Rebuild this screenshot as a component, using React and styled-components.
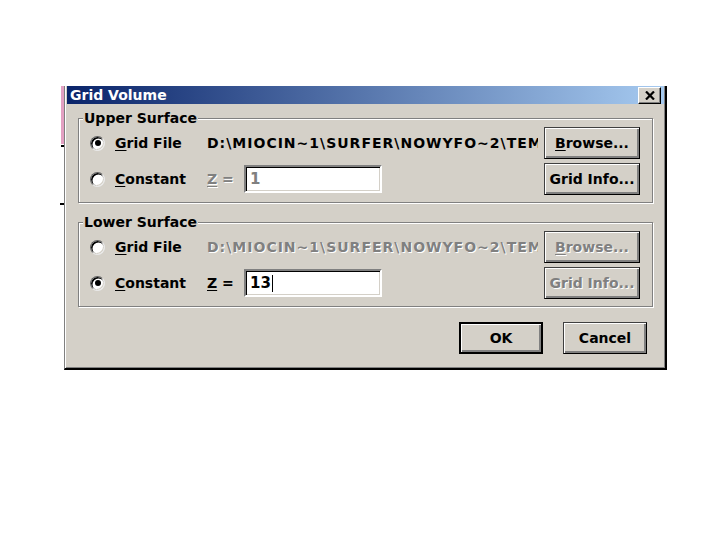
import React from "react";
import styled, { createGlobalStyle, css } from "styled-components";

const Global = createGlobalStyle`
  html, body { margin: 0; padding: 0; background: #fff; }
  body { font-family: "DejaVu Sans", "Liberation Sans", sans-serif; }
`;

const Page = styled.div`
  display: flex;
  align-items: flex-start;
  padding: 86px 0 0 58px;
`;

const Side = styled.div`
  width: 6px;
  display: flex;
  flex-direction: column;
  align-items: flex-end;
`;

const Pink = styled.div`
  width: 3px;
  height: 58px;
  background: #e3a0c2;
`;

const Tick = styled.div`
  width: ${(p) => p.$w}px;
  height: 2px;
  background: #000;
  margin-top: ${(p) => p.$top}px;
`;

const Dialog = styled.div`
  width: 597px;
  background: #d4d0c8;
  border-left: 1px solid #808080;
  border-right: 2px solid #000;
  border-bottom: 2px solid #000;
  box-shadow: inset 1px 0 #fff, inset -1px -1px #808080;
  padding: 0 1px 0 2px;
  display: flex;
  flex-direction: column;
`;

const TitleBar = styled.div`
  height: 18px;
  display: flex;
  align-items: center;
  justify-content: space-between;
  padding: 0 3px 0 3px;
  background: linear-gradient(to right, #0a246a, #a6caf0);
`;

const Title = styled.span`
  color: #fff;
  font-weight: bold;
  font-size: 14px;
  line-height: 18px;
`;

const CloseBtn = styled.div`
  width: 21px;
  height: 15px;
  background: #d4d0c8;
  border: 1px solid;
  border-color: #fff #000 #000 #fff;
  box-shadow: inset -1px -1px #808080;
  display: flex;
  align-items: center;
  justify-content: center;
`;

const Body = styled.div`
  display: flex;
  flex-direction: column;
  padding: 14px 11px 14px 11px;
`;

const Group = styled.div`
  position: relative;
  border: 1px solid #808080;
  box-shadow: inset 1px 1px #fff, 1px 1px #fff;
  padding: 8px 11px 7px 11px;
  display: grid;
  grid-template-columns: 111px 331px 96px;
  grid-template-rows: 32px 32px;
  column-gap: 6px;
  row-gap: 4px;
  margin-bottom: ${(p) => p.$mb}px;
`;

const Legend = styled.span`
  position: absolute;
  top: -10px;
  left: 4px;
  padding: 0 1px 0 1px;
  background: #d4d0c8;
  font-size: 14px;
  font-weight: bold;
  line-height: 18px;
  color: #000;
`;

const Label = styled.label`
  display: flex;
  align-items: center;
  gap: 10px;
  font-size: 14px;
  font-weight: bold;
  color: #000;
  white-space: nowrap;
`;

const Radio = styled.span`
  position: relative;
  box-sizing: border-box;
  width: 15px;
  height: 15px;
  border-radius: 50%;
  background: #fff;
  border: 1px solid;
  border-color: #606060 #e8e8e8 #e8e8e8 #606060;
  box-shadow: inset 1px 1px 0 0.5px #000, inset -1px -1px #d4d0c8;
  flex: none;
  ${(p) =>
    p.$checked &&
    css`
      &::after {
        content: "";
        position: absolute;
        left: 3.5px;
        top: 3.5px;
        width: 6px;
        height: 6px;
        border-radius: 50%;
        background: #000;
      }
    `}
`;

const disabledText = css`
  color: #808080;
  text-shadow: 1px 1px 0 #fff;
`;

const Key = styled.span`
  text-decoration: underline;
  text-underline-offset: 2px;
  text-decoration-thickness: 1px;
`;

const Path = styled.div`
  display: flex;
  align-items: center;
  overflow: hidden;
  white-space: nowrap;
  font-size: 14px;
  font-weight: bold;
  letter-spacing: 1px;
  color: #000;
  ${(p) => p.$disabled && disabledText}
`;

const ZCell = styled.div`
  display: flex;
  align-items: center;
  gap: 10px;
`;

const ZLabel = styled.span`
  font-size: 14px;
  font-weight: bold;
  color: #000;
  width: 27px;
  white-space: nowrap;
  ${(p) => p.$disabled && disabledText}
`;

const Field = styled.div`
  box-sizing: border-box;
  width: 138px;
  height: 28px;
  background: #fff;
  border: 2px solid;
  border-color: #808080 #fff #fff #808080;
  box-shadow: inset 1px 1px #000, inset -1px -1px #d4d0c8;
  display: flex;
  align-items: center;
  padding-left: 4px;
  font-size: 15px;
  font-weight: bold;
  color: ${(p) => (p.$disabled ? "#808080" : "#000")};
`;

const Caret = styled.span`
  width: 1px;
  height: 17px;
  background: #000;
  margin-left: 1px;
`;

const Button = styled.div`
  box-sizing: border-box;
  width: ${(p) => p.$w}px;
  height: 32px;
  display: flex;
  align-items: center;
  justify-content: center;
  background: #d4d0c8;
  border: 1px solid;
  border-color: #404040 #000 #000 #404040;
  box-shadow: inset 1px 1px #fff, inset -2px -2px #808080;
  font-size: 14px;
  font-weight: bold;
  color: #000;
  white-space: nowrap;
  ${(p) => p.$disabled && disabledText}
  ${(p) =>
    p.$default &&
    css`
      border: 2px solid #000;
      box-shadow: inset 1px 1px #fff, inset -2px -2px #808080;
    `}
`;

const ButtonRow = styled.div`
  display: flex;
  justify-content: flex-end;
  gap: 20px;
  padding-right: 6px;
  margin-top: 15px;
`;

const PATH = "D:\\MIOCIN~1\\SURFER\\NOWYFO~2\\TEMP.GRD";

function SurfaceGroup({ title, fileChecked, value, mb, caret }) {
  const fileOff = !fileChecked;
  return (
    <Group $mb={mb}>
      <Legend>{title}</Legend>
      <Label>
        <Radio $checked={fileChecked} />
        <span>
          <Key>G</Key>rid File
        </span>
      </Label>
      <Path $disabled={fileOff}>{PATH}</Path>
      <Button $w={96} $disabled={fileOff}>
        <span>
          <Key>B</Key>rowse...
        </span>
      </Button>
      <Label>
        <Radio $checked={!fileChecked} />
        <span>
          <Key>C</Key>onstant
        </span>
      </Label>
      <ZCell>
        <ZLabel $disabled={fileChecked}>
          <Key>Z</Key> =
        </ZLabel>
        <Field $disabled={fileChecked}>
          {value}
          {caret && <Caret />}
        </Field>
      </ZCell>
      <Button $w={96} $disabled={fileOff}>
        Grid Info...
      </Button>
    </Group>
  );
}

export default function App() {
  return (
    <>
      <Global />
      <Page>
        <Side>
          <Pink />
          <Tick $w={3} $top={1} />
          <Tick $w={4} $top={56} />
        </Side>
        <Dialog>
          <TitleBar>
            <Title>Grid Volume</Title>
            <CloseBtn>
              <svg width="10" height="9" viewBox="0 0 10 9">
                <path d="M1 0.5 L9 8.5 M9 0.5 L1 8.5" stroke="#000" strokeWidth="2.2" />
              </svg>
            </CloseBtn>
          </TitleBar>
          <Body>
            <SurfaceGroup title="Upper Surface" fileChecked value="1" mb={19} />
            <SurfaceGroup title="Lower Surface" fileChecked={false} value="13" caret mb={0} />
            <ButtonRow>
              <Button $w={84} $default>
                OK
              </Button>
              <Button $w={84}>Cancel</Button>
            </ButtonRow>
          </Body>
        </Dialog>
      </Page>
    </>
  );
}
